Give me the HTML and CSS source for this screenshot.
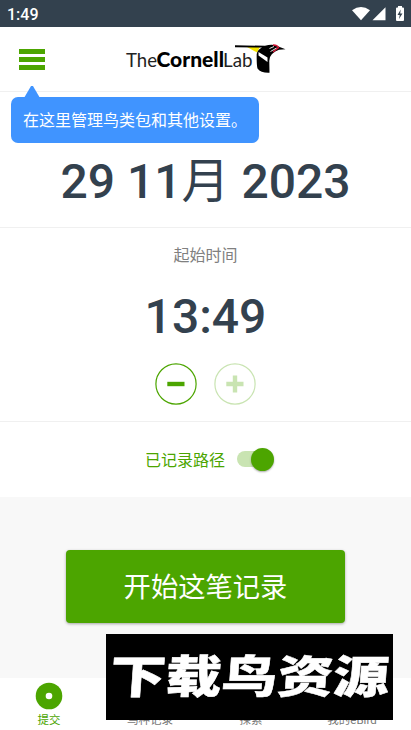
FILE: index.html
```html
<!DOCTYPE html>
<html lang="zh-CN">
<head>
<meta charset="utf-8">
<title>eBird</title>
<link rel="stylesheet" href="styles.css">
</head>
<body>
<div class="app">
  <div class="status">
    <span>1:49</span>
    <svg class="status-icons" width="54" height="16" viewBox="0 0 54 16">
      <path d="M0 4.2Q9 -2 18 4.2L9 14.3Z"/>
      <path d="M33.5 1.2V14.3H20.5Z"/>
      <path fill-rule="evenodd" d="M46 1.500V0h4v1.500h1q1 0 1 1V14q0 1-1 1h-6q-1 0-1-1V2.500q0-1 1-1ZM48.700 3.500L45.500 9h2.200L47 13L50.500 7.500H48.200Z"/>
    </svg>
  </div>
  <header class="header">
    <div class="menu"><i></i><i></i><i></i></div>
    <svg class="logo" width="164" height="36" viewBox="0 0 164 36">
      <text x="4" y="25.500" class="thin" textLength="31" lengthAdjust="spacingAndGlyphs">The</text>
      <text x="34.500" y="25.500" class="heavy" textLength="67.500" lengthAdjust="spacingAndGlyphs">Cornell</text>
      <text x="101" y="25.500" class="thin" textLength="29.500" lengthAdjust="spacingAndGlyphs">Lab</text>
      <path fill="#f6e600" d="M125 6H138L135 11.500Z"/>
      <path d="M113 4.300L143 4.800Q149 2.800 154 4.300Q158 6.500 163.500 8.300L157 8.700Q153 10 150 13Q147 16 147.300 21L147.500 31.800Q139 32.200 135.500 27.500Q134.500 24 134.700 13Q135.500 8.500 140 6.500L113 6.300Z"/>
      <path fill="#fff" d="M136.500 11L145.500 16.500V21L136.500 14.500Z"/>
      <path fill="none" stroke="#d31836" stroke-width="1.500" d="M151 4Q155 3.800 156.500 6.500L151 11"/>
      <path fill="none" stroke="#fff" stroke-width=".9" d="M147.500 7.500L152 5.500M148.500 10.500L154.500 7"/>
    </svg>
    <div class="tooltip">在这里管理鸟类包和其他设置。</div>
  </header>
  <section class="date"><span>29 11<b>月</b> 2023</span></section>
  <section class="time">
    <div class="label">起始时间</div>
    <div class="clock">13:49</div>
    <div class="steppers">
      <svg width="42" height="42" viewBox="0 0 42 42"><circle cx="21" cy="21" r="20.100"/><path d="M12.300 21H29.500"/></svg>
      <svg class="disabled" width="42" height="42" viewBox="0 0 42 42"><circle cx="21" cy="21" r="20.100"/><path d="M12.300 21H29.500M21 12.500V29.500"/></svg>
    </div>
  </section>
  <section class="track">
    <span>已记录路径</span>
    <div class="switch"><i></i></div>
  </section>
  <main class="action"><div class="start">开始这笔记录</div></main>
  <nav class="tabs">
    <div class="tab active"><svg width="28" height="28" viewBox="0 0 28 28"><circle cx="14" cy="14" r="13.300"/><circle cx="14" cy="14" r="3.300" fill="#fff"/></svg><span>提交</span></div>
    <div class="tab"><span>鸟种记录</span></div>
    <div class="tab"><span>探索</span></div>
    <div class="tab"><span>我的eBird</span></div>
  </nav>
  <svg class="banner" width="287" height="86" viewBox="0 0 287 86">
    <text transform="translate(3 59) skewX(-4)" textLength="279" lengthAdjust="spacingAndGlyphs">下载鸟资源</text>
  </svg>
</div>
</body>
</html>
```
FILE: styles.css
```css
* { box-sizing: border-box; }
body { margin: 0; font-family: Roboto, "Noto Sans CJK SC", sans-serif; }
.app { position: relative; width: 411px; height: 730px; overflow: hidden; background: #fff; display: flex; flex-direction: column; }
.status { height: 27px; flex: none; background: #33414e; color: #fff; display: flex; justify-content: space-between; align-items: center; padding: 2px 5px 0 7px; font-size: 16px; font-weight: 500; }
.status-icons { fill: #fff; margin-top: -1px; }
.header { position: relative; height: 65px; flex: none; border-bottom: 1px solid #f0f0f0; display: flex; align-items: center; padding-left: 19px; }
.menu { width: 26px; display: flex; flex-direction: column; gap: 3px; }
.menu i { height: 5px; background: #4ca500; }
.logo { margin: 0 0 0 77px; font-family: Lato, sans-serif; font-size: 20px; }
.thin { font-weight: 400; fill: #222; }
.heavy { font-weight: 900; fill: #000; }
.tooltip { position: absolute; z-index: 1; left: 11px; top: 70px; width: 248px; height: 46px; border-radius: 7px; background: #4094ff; color: #fff; font-size: 16px; line-height: 48px; padding-left: 12px; white-space: nowrap; }
.tooltip::before { content: ""; position: absolute; left: 13px; top: -11px; width: 16px; height: 12px; background: #4094ff; clip-path: polygon(44% 0, 56% 0, 100% 100%, 0 100%); }
.date { height: 136px; flex: none; padding-top: 54px; border-bottom: 1px solid #f0f0f0; text-align: center; font-size: 48px; line-height: 72px; font-weight: 500; color: #33414e; white-space: nowrap; }
.date b { font-weight: 400; }
.time { height: 194px; flex: none; border-bottom: 1px solid #f0f0f0; display: flex; flex-direction: column; align-items: center; }
.label { margin-top: 16px; font-size: 16px; line-height: 24px; color: #808080; }
.clock { margin-top: 17px; font-size: 48px; line-height: 64px; font-weight: 500; color: #33414e; }
.steppers { display: flex; gap: 17px; margin-top: 14px; fill: none; stroke: #4ca500; }
.steppers circle { stroke-width: 1.2px; }
.steppers path { stroke-width: 4.4px; }
.steppers .disabled { stroke: #c9e4b2; }
.track { height: 75px; flex: none; display: flex; align-items: center; justify-content: center; gap: 11px; padding: 0 0 1px 8px; color: #4ca500; font-size: 16px; }
.switch { width: 38px; height: 24px; display: flex; align-items: center; justify-content: flex-end; }
.switch::before { content: ""; width: 30px; height: 16px; border-radius: 8px; background: #c9e4b2; margin-right: -16px; flex: none; }
.switch i { width: 23px; height: 23px; flex: none; border-radius: 50%; background: #4ca500; box-shadow: 0 1px 2px #0005; }
.action { height: 181px; flex: none; background: #f8f8f8; padding: 53px 66px 0; }
.start { height: 73px; border-radius: 4px; background: #4ca500; box-shadow: 0 1px 3px #0005; color: #fff; font-size: 27.3px; line-height: 77px; text-align: center; }
.tabs { height: 52px; width: 404px; margin-left: -1.5px; display: grid; grid-template-columns: repeat(4, 1fr); font-size: 11.5px; line-height: 16px; color: #777; }
.tab { display: flex; flex-direction: column; align-items: center; justify-content: flex-end; padding-bottom: 2px; }
.tab svg { margin-bottom: 2px; }
.active { color: #4ca500; fill: #4ca500; }
.banner { position: absolute; left: 106px; top: 634px; background: #000; font-family: "Noto Sans CJK SC", sans-serif; font-weight: 900; font-size: 45px; fill: #fff; stroke: #fff; stroke-width: .5px; }
```
